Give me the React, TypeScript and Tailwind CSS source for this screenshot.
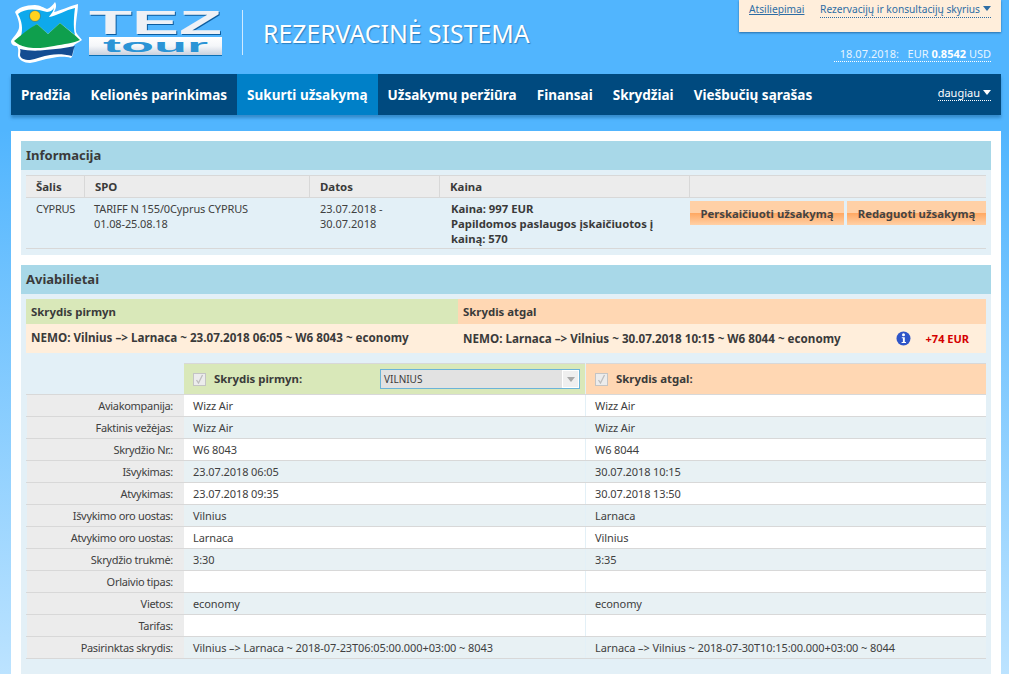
import React from "react";

const nav = ["Pradžia", "Kelionės parinkimas", "Sukurti užsakymą", "Užsakymų peržiūra", "Finansai", "Skrydžiai", "Viešbučių sąrašas"];

const rows: [string, string, string][] = [
  ["Aviakompanija:", "Wizz Air", "Wizz Air"],
  ["Faktinis vežėjas:", "Wizz Air", "Wizz Air"],
  ["Skrydžio Nr.:", "W6 8043", "W6 8044"],
  ["Išvykimas:", "23.07.2018 06:05", "30.07.2018 10:15"],
  ["Atvykimas:", "23.07.2018 09:35", "30.07.2018 13:50"],
  ["Išvykimo oro uostas:", "Vilnius", "Larnaca"],
  ["Atvykimo oro uostas:", "Larnaca", "Vilnius"],
  ["Skrydžio trukmė:", "3:30", "3:35"],
  ["Orlaivio tipas:", "", ""],
  ["Vietos:", "economy", "economy"],
  ["Tarifas:", "", ""],
  ["Pasirinktas skrydis:", "Vilnius –> Larnaca ~ 2018-07-23T06:05:00.000+03:00 ~ 8043", "Larnaca –> Vilnius ~ 2018-07-30T10:15:00.000+03:00 ~ 8044"],
];

function Caret({ color }: { color: string }) {
  return (
    <svg width="8" height="5" viewBox="0 0 8 5" className="ml-[3px] inline-block align-[2px]">
      <path d="M0 0H8L4 5Z" fill={color} />
    </svg>
  );
}

function Logo() {
  return (
    <svg width="72" height="62" viewBox="11 2 72 62" className="shrink-0">
      <path d="M15 12 C18 8 25 5 35 5 C40 5 44 8 47 9 C50 8 53 5 55 2 C57 5 56 9 54 12 C60 11 69 6 78 4 C78 12 75 24 76 32 C77 35 80 37 82 40 C78 43 74 44 73 47 C74 51 73 56 71 58 C64 56 58 57 52 58 C44 59 37 62 30 63 C24 63 19 60 18 56 C18 52 19 49 17 46 C14 46 11 45 11 41 C13 37 18 33 19 28 C20 23 17 16 15 12Z" fill="#fff" />
      <path d="M18 14 C24 9 34 8 47 12 C51 12 54 9 54 7 C54 11 51 14 49 17 C56 16 66 10 75 8 C74 16 73 26 75 35 L60 23 L48 34 L37 24 L21 36 C23 29 22 21 18 14Z" fill="#0ea9ec" />
      <circle cx="35" cy="16" r="5.5" fill="#ffd21f" stroke="#0b5d9a" strokeWidth="0.5" />
      <path d="M14 41 C20 36 28 29 37 24 L48 34 L60 23 C66 28 74 34 80 40 C74 43 64 44 54 46 C44 48 34 49 26 47 C21 46 17 44 14 41Z" fill="#0f9f4d" />
      <path d="M20 49 C28 51 38 51 45 50 C56 49 66 48 75 46 C73 49 73 54 72 56 C64 54 56 54 50 55 C43 56 36 59 30 60 C24 60 20 58 20 55 C20 53 21 51 20 49Z" fill="#134c92" />
    </svg>
  );
}

function Wordmark() {
  return (
    <svg width="134" height="47" viewBox="0 0 134 47" className="shrink-0 overflow-visible">
      <defs>
        <linearGradient id="tezFill" x1="0" y1="0" x2="0" y2="1">
          <stop offset="0" stopColor="#ffffff" />
          <stop offset="0.5" stopColor="#f4f6f9" />
          <stop offset="1" stopColor="#c9d1de" />
        </linearGradient>
      </defs>
      <text x="0" y="24" fontSize="33" fontWeight="900" fontFamily="'Liberation Sans', sans-serif" textLength="133" lengthAdjust="spacingAndGlyphs" fill="#eef1f6" className="drop-shadow-[1px_1px_0_#0d5c9e]">
        TEZ
      </text>
      <rect x="0" y="27" width="133" height="18" fill="url(#tezFill)" />
      <rect x="0" y="45" width="133" height="1" fill="#0b6fb5" />
      <text x="14" y="42" fontSize="18" fontWeight="700" fontFamily="'Liberation Sans', sans-serif" textLength="105" lengthAdjust="spacingAndGlyphs" fill="#2b94d6">
        tour
      </text>
    </svg>
  );
}

function Check() {
  return (
    <span className="flex h-[13px] w-[13px] shrink-0 items-center justify-center border border-[#c4c4c4] bg-[#ececec]">
      <svg width="9" height="10" viewBox="0 0 9 10">
        <path d="M1.5 6 L3.5 9 L7.5 1" fill="none" stroke="#bdbdbd" strokeWidth="1.3" />
      </svg>
    </span>
  );
}

function Section({ title, children }: { title: string; children: React.ReactNode }) {
  return (
    <section className="bg-[#e3f0f7]">
      <h2 className="h-[29px] bg-[#a8d8e8] pl-[5px] text-[13px] leading-[29px] font-bold text-[#3a3a3a]">{title}</h2>
      {children}
    </section>
  );
}

function Btn({ children, w }: { children: React.ReactNode; w: string }) {
  return (
    <button className={`h-[24px] ${w} bg-[linear-gradient(#ffd0a6_0,#ffd0a6_50%,#ffa964_52%,#ffd0a6_100%)] text-center text-[11.3px] font-bold text-[#444]`}>
      {children}
    </button>
  );
}

export default function App() {
  return (
    <div className="h-[674px] overflow-hidden bg-[linear-gradient(#51b5fe_130px,#bce3ff_674px)] pr-[8px] pl-[11px] text-[11px] text-[#404040] [font-family:'Noto_Sans',sans-serif]">
      <header className="flex h-[74px] items-start justify-between">
        <div className="flex items-start pt-[2px]">
          <Logo />
          <div className="mt-[8px] ml-[6px]">
            <Wordmark />
          </div>
          <div className="mt-[8px] ml-[19px] h-[45px] w-px bg-[#cfeaff]" />
          <div className="mt-[14px] ml-[20px] text-[24.8px] leading-[34px] text-white [text-shadow:1px_1px_1px_#2a7fc0]">REZERVACINĖ SISTEMA</div>
        </div>
        <div className="flex flex-col items-end">
          <div className="flex h-[32px] w-[262px] items-start justify-between bg-[#ffeedb] pt-[2px] pr-[10px] pl-[10px] text-[10.2px] whitespace-nowrap text-[#2e6da4] shadow-[0_1px_2px_#2a6fa8]">
            <a className="leading-[15px] underline">Atsiliepimai</a>
            <span className="border-b border-dotted border-[#2e6da4] leading-[15px]">
              Rezervacijų ir konsultacijų skyrius
              <Caret color="#2e6da4" />
            </span>
          </div>
          <div className="mt-[15px] mr-[10px] border-b border-dotted border-white pl-[6px] leading-[14px] whitespace-nowrap text-[#e6f4ff]">
            18.07.2018:&nbsp;&nbsp;&nbsp;EUR <b className="text-white">0.8542</b> USD
          </div>
        </div>
      </header>

      <nav className="flex h-[41px] items-stretch bg-[#004a7f] pt-[1px] text-[13.5px] font-bold text-white shadow-[0_3px_3px_rgba(0,60,110,0.35)]">
        {nav.map((n) => (
          <a key={n} className={`-mt-[1px] flex items-center px-[10px] pt-[1px] ${n === "Sukurti užsakymą" ? "bg-[#0080c8]" : ""}`}>
            {n}
          </a>
        ))}
        <span className="mt-[11px] mr-[10px] ml-auto h-[15px] border-b border-dotted border-white text-[11px] leading-[13px] font-normal">
          daugiau
          <Caret color="#fff" />
        </span>
      </nav>

      <main className="mt-[16px] bg-white px-[10px] pt-[10px]">
        <Section title="Informacija">
          <div className="px-[5px] pt-[5px] pb-[6px]">
            <div className="grid grid-cols-[58px_225px_130px_250px_297px] border-t border-b border-[#d8d8d8] bg-[#ececec] text-[11.4px] leading-[21px] font-bold text-[#3a3a3a]">
              <div className="pl-[10px]">Šalis</div>
              <div className="border-l border-[#d8d8d8] pl-[10px]">SPO</div>
              <div className="border-l border-[#d8d8d8] pl-[10px]">Datos</div>
              <div className="border-l border-[#d8d8d8] pl-[10px]">Kaina</div>
              <div className="border-l border-[#d8d8d8]">&nbsp;</div>
            </div>
            <div className="grid h-[51px] grid-cols-[58px_225px_130px_250px_297px] border-b border-[#d8d8d8] leading-[15px]">
              <div className="pt-[3px] pl-[10px] tracking-[-0.3px]">CYPRUS</div>
              <div className="pt-[3px] pl-[10px] tracking-[-0.12px]">
                TARIFF N 155/0Cyprus CYPRUS
                <br />
                01.08-25.08.18
              </div>
              <div className="pt-[3px] pl-[11px]">
                23.07.2018 -
                <br />
                30.07.2018
              </div>
              <div className="pt-[3px] pl-[12px] text-[11.3px] font-bold whitespace-nowrap text-[#3a3a3a]">
                Kaina: 997 EUR
                <br />
                Papildomos paslaugos įskaičiuotos į
                <br />
                kainą: 570
              </div>
              <div className="flex items-start justify-between pt-[3px] pl-px">
                <Btn w="w-[154px]">Perskaičiuoti užsakymą</Btn>
                <Btn w="w-[139px]">Redaguoti užsakymą</Btn>
              </div>
            </div>
          </div>
        </Section>

        <div className="h-[10px]" />

        <Section title="Aviabilietai">
          <div className="px-[5px] pt-[5px] pb-[40px]">
            <div className="grid h-[25px] grid-cols-[432px_528px] text-[11.4px] leading-[25px] font-bold text-[#3a3a3a]">
              <div className="bg-[#d9e8b9] pl-[5px]">Skrydis pirmyn</div>
              <div className="bg-[#ffd7b3] pl-[5px]">Skrydis atgal</div>
            </div>
            <div className="grid h-[29px] grid-cols-[432px_528px] bg-[#ffeedb] text-[11.65px] leading-[27px] font-bold whitespace-nowrap text-[#3a3a3a]">
              <div className="pl-[5px]">NEMO: Vilnius –&gt; Larnaca ~ 23.07.2018 06:05 ~ W6 8043 ~ economy</div>
              <div className="flex items-center pl-[5px]">
                <span>NEMO: Larnaca –&gt; Vilnius ~ 30.07.2018 10:15 ~ W6 8044 ~ economy</span>
                <svg width="15" height="15" viewBox="0 0 15 15" className="ml-auto">
                  <circle cx="7.5" cy="7.5" r="7" fill="#2f55c8" />
                  <circle cx="7.5" cy="3.8" r="1.5" fill="#fff" />
                  <path d="M5.8 6.2H8.8V11H10V12H5.6V11H6.9V7.2H5.8Z" fill="#fff" />
                </svg>
                <span className="mr-[17px] ml-[15px] text-[11px] text-[#d40000]">+74 EUR</span>
              </div>
            </div>

            <div className="mt-[10px] grid h-[32px] grid-cols-[158px_401px_401px] border-b border-[#d8d8d8]">
              <div />
              <div className="flex items-center border-t border-[#d8d8d8] bg-[#d9e8b9] pl-[9px] text-[11.4px] font-bold text-[#3a3a3a]">
                <Check />
                <span className="ml-[8px] w-[166px]">Skrydis pirmyn:</span>
                <div className="flex h-[20px] w-[200px] items-center justify-between border border-[#6cb4d8] bg-[#e2e2e2] pl-[3px] text-[10px] font-normal">
                  VILNIUS
                  <span className="flex h-full w-[17px] items-center justify-center border border-white bg-[#efefef]">
                    <svg width="8" height="5" viewBox="0 0 8 5">
                      <path d="M0 0H8L4 5Z" fill="#a8a8a8" />
                    </svg>
                  </span>
                </div>
              </div>
              <div className="ml-px flex items-center border-t border-[#d8d8d8] bg-[#ffd7b3] pl-[9px] text-[11.4px] font-bold text-[#3a3a3a]">
                <Check />
                <span className="ml-[8px]">Skrydis atgal:</span>
              </div>
            </div>

            {rows.map(([label, a, b], i) => (
              <div key={label} className="grid h-[22px] grid-cols-[158px_401px_401px] grid-rows-[21px] border-b border-[#d8d8d8] leading-[22px]">
                <div className="ml-px overflow-hidden bg-[#ececec] pr-[11px] text-right tracking-[-0.3px]">{label}</div>
                <div className={`overflow-hidden ${i % 2 === 0 ? "bg-white" : "bg-[#e8f1f4]"} pl-[9px] tracking-[-0.09px] whitespace-nowrap`}>{a}</div>
                <div className={`ml-px overflow-hidden ${i % 2 === 0 ? "bg-white" : "bg-[#e8f1f4]"} pl-[9px] tracking-[-0.09px] whitespace-nowrap`}>{b}</div>
              </div>
            ))}
          </div>
        </Section>
      </main>
    </div>
  );
}
